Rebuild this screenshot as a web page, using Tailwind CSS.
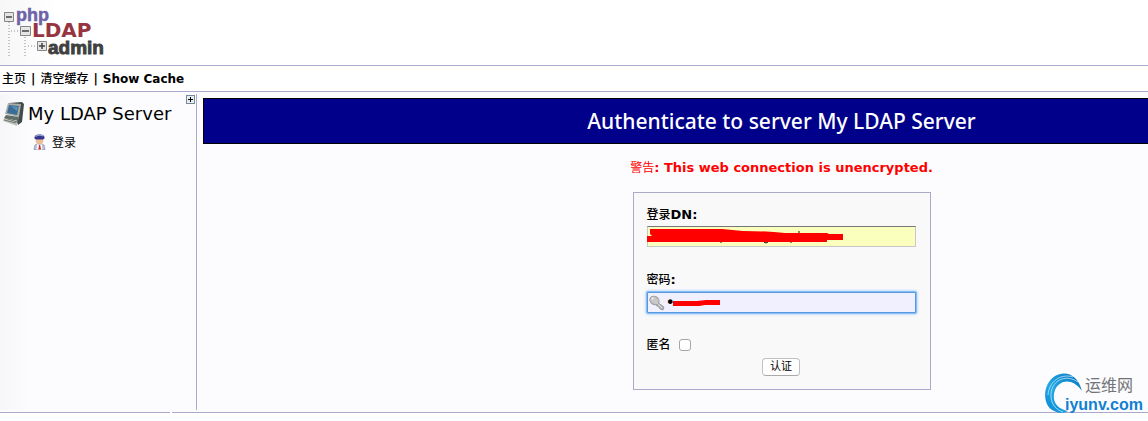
<!DOCTYPE html>
<html lang="zh-CN">
<head>
    <meta charset="UTF-8">
    <meta name="viewport" content="width=device-width, initial-scale=1.0">
    <title>phpLDAPadmin</title>
    <script src="https://cdn.jsdelivr.net/npm/@tailwindcss/browser@4"></script>
</head>
<body class="relative overflow-hidden bg-white text-[12px] text-black font-['DejaVu_Sans','Noto_Sans_CJK_SC',sans-serif]">

    <header class="h-[65px] bg-linear-to-r from-[#f7f7f8] to-white to-5% pt-2 pl-1">
        <a href="#" aria-label="phpLDAPadmin">
            <svg width="110" height="52" viewBox="0 0 110 52" font-weight="bold" class="overflow-visible">
                <g stroke="#c4c4c4" stroke-width="2" stroke-dasharray="1 2" fill="none">
                    <path d="M5 14V48M21 29V48M7 23H16M24 38H32"/>
                </g>
                <g fill="#e4e6e7" stroke="#858585">
                    <path d="M.5 4.500h9v9h-9zM16.500 18.500h10v9h-10zM33.500 33.500h9v9h-9z"/>
                    <path d="M2 9h6M18 23h7M35 38h6M38 35v6" stroke="#444" stroke-width="1.500"/>
                </g>
                <text x="12" y="13" font-family="Liberation Sans" font-size="18" fill="#6e62a8" stroke="#6e62a8" stroke-width=".5">php</text>
                <text x="28" y="29" font-family="DejaVu Sans" font-size="20" fill="#963541">LDAP</text>
                <text x="44" y="46" font-family="Liberation Sans" font-size="19" fill="#404040" stroke="#404040" stroke-width=".9">admin</text>
            </svg>
        </a>
    </header>

    <nav class="flex h-[27px] items-center gap-[5px] border-y border-[#aaaacc] bg-white pl-[2px] text-[12px] font-bold">
        <a href="#" class="font-medium">主页</a>
        <span>|</span>
        <a href="#" class="font-medium">清空缓存</a>
        <span>|</span>
        <a href="#">Show Cache</a>
    </nav>

    <!-- the main pane is wider than the window and runs off its right edge -->
    <div class="flex h-[320px] w-[119%] bg-[#fcfcfe] pt-[2px] pb-[2px]">
        <aside class="relative w-[197px] flex-none border-r border-[#aaaacc] bg-linear-to-r from-[#f6f6f8] to-[#fcfcfe] to-15%">
            <button aria-label="+" class="absolute top-[1px] right-[1px] h-[9px] w-[9px] border border-[#778899] bg-[#e4eeee]">
                <svg width="7" height="7" viewBox="0 0 7 7" stroke="#000" fill="none"><path d="M1 3.500h5M3.500 1v5"/></svg>
            </button>
            <div class="flex items-center gap-1 pt-2 pl-[3px]">
                <svg width="21" height="24" viewBox="0 0 21 24">
                    <path d="M6 1 19 0l2 2-2 18-4 3-1-3 2-5-3-2z" fill="#414b4a"/>
                    <path d="M5 1 18 2 16 15 2 12z" fill="#a9aca6"/>
                    <path d="M6 3 16 4 14 13 4 11z" fill="#3a6d96"/>
                    <path d="M8 4 15 5 14 9z" fill="#5b91b5"/>
                    <path d="M3 13 16 15 15 19 1 16z" fill="#606e6a"/>
                    <path d="M1 16 14 19 14 24 0 19z" fill="#c2c5bd"/>
                    <path d="M1 18 13 21M2 16 14 20" stroke="#59645e" stroke-width=".8"/>
                </svg>
                <span class="text-[18px] leading-6">My LDAP Server</span>
            </div>
            <a href="#" class="flex items-center gap-[6px] pl-[33px] pt-1 leading-5">
                <svg width="13" height="16" viewBox="0 0 13 16">
                    <path d="M1 15 2 11 5 9.500h3L11 11l1 4.500H1z" fill="#b9c4da" stroke="#8592b0" stroke-width=".7"/>
                    <path d="M4.500 9.500 6.500 12 8.500 9.500l1 6h-6z" fill="#fff"/>
                    <path d="M6 11h1.200L8 15.500H5.300z" fill="#d42d35"/>
                    <ellipse cx="6.500" cy="6.500" rx="3.900" ry="3.700" fill="#edbd98"/>
                    <path d="M1.500 4.500Q1 1 5 .5h3q4 .5 3.500 4L10 5.500H3z" fill="#35358c"/>
                    <path d="M2.500 2.500Q6 0 10.500 2" stroke="#9da6d6" stroke-width="1.300" fill="none"/>
                </svg>
                <span class="pt-[3px]">登录</span>
            </a>
        </aside>

        <main class="ml-[6px] mr-[6px] flex-1 pt-1">
            <h1 class="border border-black bg-[#00008b] text-center text-[21px] leading-[44px] font-medium text-white font-['Noto_Sans',sans-serif]">Authenticate to server My LDAP Server</h1>
            <p class="mt-4 text-center text-[13px] leading-4 font-bold text-[#ff0000]"><span class="text-[12px] font-normal">警告</span>: This web connection is unencrypted.</p>

            <form class="mx-auto mt-4 flex h-[198px] w-[298px] flex-col border border-[#aaaacc] bg-[#f9f9f9] pr-[14px] pl-[13px] pt-3" onsubmit="return false">
                <label for="login" class="leading-5 font-bold"><span class="font-medium">登录</span><span class="text-[13px]">DN:</span></label>
                <div class="relative mt-[1px]">
                    <input id="login" type="text" class="block h-[21px] w-full border border-[#c8c8c8] border-t-[#777] bg-[#faffbd] px-1 outline-none">
                    <svg class="absolute top-[1px] left-0" width="200" height="18" viewBox="0 0 200 18">
                        <path d="M74 15v1M144 15v1M151 5h2" stroke="#111"/>
                        <path d="M117 15q2 2 4 0" stroke="#111" fill="none"/>
                        <path d="M3 2H75L96 4Q120 4 138 6H180L182 7H196V13H180V15H0V9H5L3 7z" fill="#f00"/>
                    </svg>
                </div>

                <label for="password" class="mt-[23px] leading-5 font-bold"><span class="font-medium">密码</span><span class="text-[13px]">:</span></label>
                <div class="relative mt-[2px]">
                    <input id="password" type="password" value="p" class="block h-[21px] w-full rounded-[1px] border border-[#5898de] bg-[#f0f0ff] pl-[18px] text-[16px] outline-none ring-1 ring-[#85bdf5] shadow-[0_0_3px_1px_#8fc3f8]">
                    <svg class="absolute top-[3px] left-[2px]" width="17" height="17" viewBox="0 0 17 17">
                        <path d="M8 7 15 12 14 15 11 14 10 12 8 11 6 9" fill="#b5b5b5" stroke="#929292" stroke-width=".8"/>
                        <ellipse cx="5.500" cy="5.500" rx="4.800" ry="4" fill="#c7c7c7" stroke="#989898" transform="rotate(35 5.500 5.500)"/>
                        <circle cx="3.500" cy="3.500" r="1" fill="#f8f8f8"/>
                        <path d="M8 8 13 13" stroke="#ddd"/>
                    </svg>
                    <svg class="absolute top-[7px] left-[26px]" width="48" height="8" viewBox="0 0 48 8">
                        <path d="M0 2H24L33 1H47V6H32L26 7H0z" fill="#f00"/>
                    </svg>
                </div>

                <div class="mt-[22px] flex h-5 items-center gap-2">
                    <label for="anonymous" class="font-medium">匿名</label>
                    <input id="anonymous" type="checkbox" class="h-3 w-3 appearance-none rounded-[3px] border border-[#a5a5a5] bg-white">
                </div>
                <button type="submit" class="mt-[3px] h-[18px] w-[38px] self-center rounded-[4px] border border-[#c0c0c0] border-b-[#aaa] bg-white text-[11px] leading-4">认证</button>
            </form>
        </main>
    </div>

    <footer class="flex h-[9px] gap-[2px] bg-white">
        <div class="w-[170px] border-t border-[#aaaacc]"></div>
        <div class="flex-1 border-t border-[#aaaacc]"></div>
    </footer>

    <!-- site mark over the lower right corner -->
    <div class="absolute right-[4px] bottom-[6px] h-[42px] w-[99px] font-['Liberation_Sans','Noto_Sans_CJK_SC',sans-serif]">
        <svg class="absolute top-0 left-0" width="38" height="42" viewBox="0 0 38 42">
            <defs>
                <linearGradient id="swirl" x1="1" y1="0" x2="0" y2="1">
                    <stop offset="0" stop-color="#0872bd"/>
                    <stop offset=".6" stop-color="#20a9e5"/>
                    <stop offset="1" stop-color="#0b83d0"/>
                </linearGradient>
            </defs>
            <path d="M37 18C33 1 20-3 10 3C-3 11-3 33 9 38C15 41 20 40 23 38C12 36 6 28 10 17C15 6 28 5 37 18z" fill="url(#swirl)"/>
            <path d="M33 9C20 0 5 8 6 24C7 33 12 37 18 39M28 4C15 0 4 9 3 22" fill="none" stroke="#d9f1fc" stroke-width=".7"/>
        </svg>
        <span class="absolute top-[3px] left-[40px] text-[16px] leading-5 whitespace-nowrap text-[#707478]">运维网</span>
        <span class="absolute top-[22px] left-[20px] text-[16px] leading-5 font-bold text-[#117fd3]">iyunv.com</span>
    </div>

</body>
</html>
